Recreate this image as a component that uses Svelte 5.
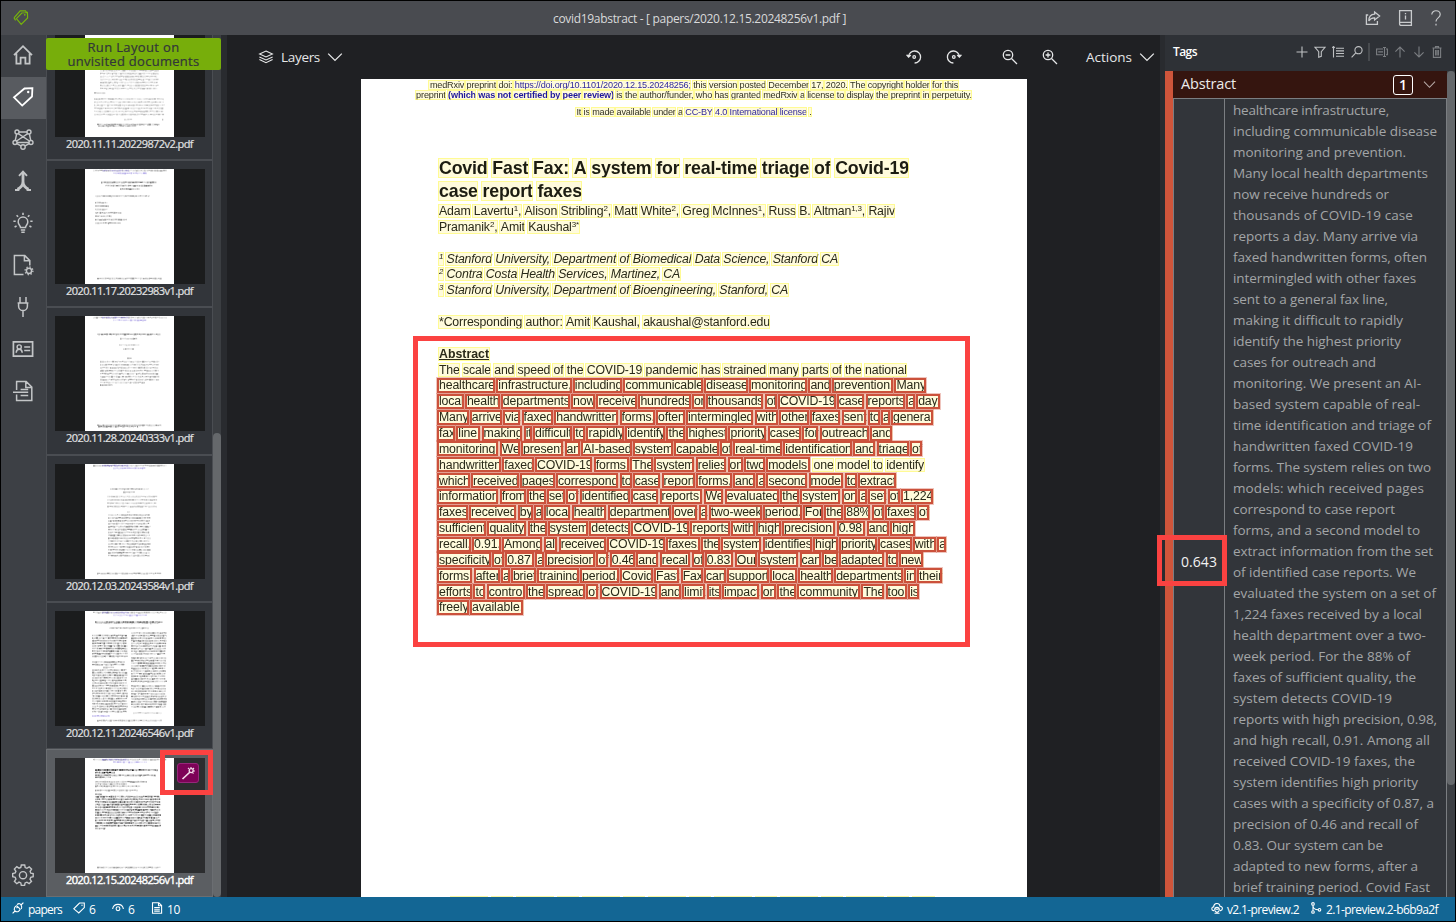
<script>
  function fit(node, width) {
    node.style.letterSpacing = '0px';
    const natural = node.getBoundingClientRect().width;
    const count = node.textContent.length;
    node.style.letterSpacing = (width - natural) / count + 'px';
  }

  const navIcons = ['home', 'tag', 'model', 'merge', 'bulb', 'docgear', 'plug', 'card', 'docline'];

  // [x, y, width, rows, pitch, opacity, colour]
  const G = '#222';
  const P = '#4a35c8';
  const head = [
    [8, 1.6, 74, 1, 3, 0.45, G],
    [17, 1.6, 28, 1, 3, 0.5, P],
    [28, 4.2, 34, 1, 3, 0.5, P]
  ];
  const foot = [[12, 109.5, 65, 1, 3, 0.55, G]];
  const docs = [
    { name: '2020.11.11.20229872v2.pdf', blocks: [[15, 48.5, 59, 7, 3, 0.4, G], [9, 71, 12, 1, 3, 0.5, G], [9, 77, 71, 6, 3.1, 0.38, G], [39, 97.5, 10, 1, 3, 0.4, G], [77, 97.5, 3, 1, 3, 0.4, G], [12, 102.5, 63, 1, 3, 0.6, G], [13, 104, 40, 1, 3, 0.5, G]] },
    { name: '2020.11.17.20232983v1.pdf', blocks: [...head, [16, 13.3, 56, 1, 3, 0.75, G], [20, 16.7, 48, 1, 3, 0.75, G], [35, 20, 20, 1, 3, 0.75, G], [10, 27, 56, 1, 3, 0.45, G], [10, 33.6, 14, 3, 3.4, 0.55, G], [10, 43.8, 27, 1, 3, 0.55, G], [10, 47.2, 17, 1, 3, 0.55, G], [10, 50.6, 34, 1, 3, 0.55, G], [10, 54, 26, 1, 3, 0.55, G], ...foot] },
    { name: '2020.11.28.20240333v1.pdf', blocks: [...head, [12, 18.3, 65, 1, 3, 0.7, G], [35, 22.7, 19, 1, 3, 0.6, G], [34, 29, 21, 1, 3, 0.35, G], [38, 33, 12, 1, 3, 0.45, G], [42, 42.3, 6, 1, 3, 0.5, G], [15, 45.7, 60, 7, 3, 0.5, G], [15, 66.5, 45, 1, 3, 0.4, G], [15, 69, 14, 1, 3, 0.7, G], [12, 109.3, 65, 1, 3, 0.6, G], [13, 110.5, 42, 1, 3, 0.7, G]] },
    { name: '2020.12.03.20243584v1.pdf', blocks: [...head, [25, 25, 39, 1, 3, 0.5, G], [38, 28, 12, 1, 3, 0.5, G], [22, 32.6, 51, 4, 3.3, 0.4, G], [42, 48, 5, 1, 3, 0.4, G], [23, 51, 43, 15, 2.9, 0.6, G], [44, 102, 1, 1, 3, 0.6, G], ...foot] },
    { name: '2020.12.11.20246546v1.pdf', blocks: [...head, [10, 11, 68, 1, 3, 0.85, G], [10, 12, 66, 1, 3, 0.45, G], [24, 17, 41, 1, 3, 0.5, G], [7, 24.5, 36, 9, 2.6, 0.8, G], [7, 51, 34, 2, 2.6, 0.6, G], [18, 56.4, 12, 1, 3, 0.45, G], [7, 59, 36, 17, 2.6, 0.65, G], [7, 105, 18, 1, 3, 0.55, P], [46, 22, 36, 9, 2.6, 0.65, G], [46, 47, 36, 10, 2.6, 0.65, G], [46, 75, 36, 9, 2.6, 0.65, G], [48, 102, 30, 1, 3, 0.4, G], ...foot] },
    { name: '2020.12.15.20248256v1.pdf', active: true, blocks: [...head, [10, 12, 63, 1, 3, 1.2, '#000'], [10, 14.6, 20, 1, 3, 1.2, '#000'], [10, 17.3, 61, 1, 3, 0.8, G], [10, 19.3, 17, 1, 3, 0.7, G], [10, 23.8, 53, 1, 3, 0.6, G], [10, 26, 32, 1, 3, 0.6, G], [10, 28.2, 47, 1, 3, 0.6, G], [10, 32.3, 44, 1, 3, 0.6, G], [10, 36.3, 7, 1, 3, 0.9, G], [10, 38.6, 66, 12, 2.64, 0.95, G], [10, 70.4, 12, 1, 3, 0.8, G], ...foot] }
  ];

  function strokes(blocks, seed) {
    let s = seed * 7919 + 17;
    const rnd = () => (s = (s * 16807) % 2147483647) / 2147483647;
    const out = [];
    for (const [x, y, w, rows, pitch, op, fill] of blocks) {
      for (let r = 0; r < rows; r++) {
        let cx = x;
        const end = x + w - rnd() * 2;
        while (cx < end) {
          const len = Math.min(0.6 + rnd() * 2.2, end - cx);
          out.push({ x: cx, y: y + r * pitch - 0.9 + rnd() * 0.3, w: len, h: 1.2 + rnd() * 0.7, o: Math.min(1, op * (0.2 + rnd() * 0.6)), fill });
          cx += len + rnd() * 0.5;
        }
      }
    }
    return out;
  }
  const thumbs = docs.map((d, i) => ({ ...d, marks: strokes(d.blocks, i + 1) }));

  const w = (text, kind = 'y') => text.split(' ').map((t) => ({ parts: t.split('^'), kind }));
  const header = [
    { width: 528, words: [...w('medRxiv preprint doi:'), ...w('https://doi.org/10.1101/2020.12.15.20248256;', 'y link'), ...w('this version posted December 17, 2020. The copyright holder for this')] },
    { width: 556, words: [...w('preprint'), ...w('(which was not certified by peer review)', 'y strong'), ...w('is the author/funder, who has granted medRxiv a license to display the preprint in perpetuity.')] },
    { width: 235, gap: true, words: [...w('It is made available under a'), ...w('CC-BY 4.0 International license', 'y link'), ...w('.')] }
  ];
  const title = [
    { width: 470, words: w('Covid Fast Fax: A system for real-time triage of Covid-19') },
    { width: 143, words: w('case report faxes') }
  ];
  const blank = { width: 0, words: [] };
  const body = [
    { width: 456, words: w('Adam Lavertu^1^, Alison Stribling^2^, Matt White^2^, Greg McInnes^1^, Russ B. Altman^1,3^, Rajiv') },
    { width: 140, words: w('Pramanik^2^, Amit Kaushal^3*^') },
    blank,
    { width: 399, cls: 'it', words: w('^1^ Stanford University, Department of Biomedical Data Science, Stanford CA') },
    { width: 241, cls: 'it', words: w('^2^ Contra Costa Health Services, Martinez, CA') },
    { width: 349, cls: 'it', words: w('^3^ Stanford University, Department of Bioengineering, Stanford, CA') },
    blank,
    { width: 331, words: w('*Corresponding author: Amit Kaushal, akaushal@stanford.edu') },
    blank,
    { width: 50, cls: 'sub', words: w('Abstract') },
    { width: 468, words: w('The scale and speed of the COVID-19 pandemic has strained many parts of the national') },
    { width: 487, words: w('healthcare infrastructure, including communicable disease monitoring and prevention. Many', 'r') },
    { width: 501, words: w('local health departments now receive hundreds or thousands of COVID-19 case reports a day.', 'r') },
    { width: 494, words: w('Many arrive via faxed handwritten forms, often intermingled with other faxes sent to a general', 'r') },
    { width: 453, words: w('fax line, making it difficult to rapidly identify the highest priority cases for outreach and', 'r') },
    { width: 483, words: w('monitoring. We present an AI-based system capable of real-time identification and triage of', 'r') },
    { width: 485, words: [...w('handwritten faxed COVID-19 forms. The system relies on two models:', 'r'), ...w('one model to identify')] },
    { width: 457, words: w('which received pages correspond to case report forms, and a second model to extract', 'r') },
    { width: 494, words: w('information from the set of identified case reports. We evaluated the system on a set of 1,224', 'r') },
    { width: 490, words: w('faxes received by a local health department over a two-week period. For the 88% of faxes of', 'r') },
    { width: 476, words: w('sufficient quality, the system detects COVID-19 reports with high precision, 0.98, and high', 'r') },
    { width: 507, words: w('recall, 0.91. Among all received COVID-19 faxes, the system identifies high priority cases with a', 'r') },
    { width: 484, words: w('specificity of 0.87, a precision of 0.46 and recall of 0.83. Our system can be adapted to new', 'r') },
    { width: 503, words: w('forms, after a brief training period. Covid Fast Fax can support local health departments in their', 'r') },
    { width: 480, words: w('efforts to control the spread of COVID-19 and limit its impact on the community. The tool is', 'r') },
    { width: 84, words: w('freely available.', 'r') }
  ];

  const tagLines = [
    ['healthcare infrastructure,', 156], ['including communicable disease', 204], ['monitoring and prevention.', 173],
    ['Many local health departments', 195], ['now receive hundreds or', 156], ['thousands of COVID-19 case', 180],
    ['reports a day. Many arrive via', 185], ['faxed handwritten forms, often', 194], ['intermingled with other faxes', 183],
    ['sent to a general fax line,', 155], ['making it difficult to rapidly', 170], ['identify the highest priority', 168],
    ['cases for outreach and', 143], ['monitoring. We present an AI-', 188], ['based system capable of real-', 187],
    ['time identification and triage of', 198], ['handwritten faxed COVID-19', 180], ['forms. The system relies on two', 198],
    ['models: which received pages', 191], ['correspond to case report', 162], ['forms, and a second model to', 187],
    ['extract information from the set', 200], ['of identified case reports. We', 183], ['evaluated the system on a set of', 203],
    ['1,224 faxes received by a local', 189], ['health department over a two-', 193], ['week period. For the 88% of', 177],
    ['faxes of sufficient quality, the', 183], ['system detects COVID-19', 159], ['reports with high precision, 0.98,', 204],
    ['and high recall, 0.91. Among all', 197], ['received COVID-19 faxes, the', 182], ['system identifies high priority', 185],
    ['cases with a specificity of 0.87, a', 201], ['precision of 0.46 and recall of', 185], ['0.83. Our system can be', 150],
    ['adapted to new forms, after a', 185], ['brief training period. Covid Fast', 197]
  ];
</script>

{#snippet pdfLine(line)}
  <span class="run" use:fit={line.width}>{#each line.words as word, i}{#if i}{' '}{/if}<span class="word {word.kind}">{word.parts[0]}{#if word.parts[1]}<sup>{word.parts[1]}</sup>{word.parts[2]}{/if}</span>{/each}</span>
{/snippet}

{#snippet navIcon(name)}
  <svg width="24" height="24" viewBox="0 0 24 24" fill="none" stroke="currentColor" stroke-width="1.6">
    {#if name === 'home'}
      <path d="M3 12.2 12 3.2l9 9M5.4 10.6v10h4.2v-6h4.8v6h4.2v-10" stroke-width="1.8" />
    {:else if name === 'tag'}
      <path d="M13.5 3.5 21.4 3.2 21 11.5 11.2 20.6 3 12.4Z" stroke-width="1.8" /><circle cx="17.2" cy="7" r="1.2" fill="currentColor" stroke="none" />
    {:else if name === 'model'}
      <g stroke-width="1.4"><circle cx="6" cy="5" r="2" /><circle cx="18" cy="5" r="2" /><circle cx="4" cy="15.5" r="2" /><circle cx="20" cy="15.5" r="2" /><circle cx="12" cy="20" r="2.2" />
      <path d="M8 5h8M5.6 7 4.3 13.4M18.4 7l1.3 6.4M5.8 16.6l4.2 2.3M18.2 16.6 14 18.900M7.300 6.600 18.400 14M16.700 6.600 5.600 14M6 15.500h12" /></g>
    {:else if name === 'merge'}
      <path d="M12 4v8.500c0 3-1.600 5.800-5.500 7.700M12 12.500c0 3 1.600 5.800 5.500 7.700" stroke-width="2.800" /><path d="M8 6.800 12 2.600l4 4.200M4 21h4.400M15.600 21H20" stroke-width="1.900" />
    {:else if name === 'bulb'}
      <path d="M9.5 16.5c0-2-2.3-2.8-2.3-5.6a4.8 4.8 0 0 1 9.6 0c0 2.8-2.3 3.6-2.3 5.6ZM9.8 19h4.4M10.3 21.2h3.4" stroke-width="1.500" /><path d="M12 1.7v2.2M5.6 4.2l1.5 1.6M18.4 4.2l-1.5 1.6M2.4 10.3h2.3M19.3 10.3h2.3M3.6 16l2-1M20.4 16l-2-1" stroke-width="1.6" />
    {:else if name === 'docgear'}
      <path d="M12.5 21.4H3.4V2.6h10.4l5 5v5M13.4 2.8v5h5" stroke-width="1.5" /><circle cx="18" cy="17.8" r="2.6" stroke-width="1.5" /><circle cx="18" cy="17.8" r="3.9" stroke-width="1.4" stroke-dasharray="1.3 1.76" />
    {:else if name === 'plug'}
      <path d="M9 2v6M15 2v6M6.6 8h10.8M7.6 8v3.2a4.4 4.4 0 0 0 8.8 0V8M12 15.6V22" stroke-width="1.5" />
    {:else if name === 'card'}
      <path d="M2.4 4.8h19.2v14.4H2.4Z" stroke-width="1.700" /><circle cx="8.2" cy="10" r="2.1" stroke-width="1.4" /><path d="M5.2 15.8c.2-4.6 5.8-4.6 6 0M13.2 10h6M13.2 13.6h6" stroke-width="1.5" />
    {:else if name === 'docline'}
      <path d="M5.6 11V2.6h9.6l5.6 5.4v13.4H5.6v-6M14.8 2.8v5.6h5.6M2 13.2h9M9.6 10.6h7.6M11 13.2h6.2M9.6 16.6h7.6" stroke-width="1.5" />
    {:else if name === 'gear'}
      <path d="M10.3 2h3.4l.5 2.6 1.7.7 2.3-1.5 2.4 2.4-1.5 2.2.7 1.8 2.4.4v3.2l-2.4.5-.8 1.8 1.5 2.2-2.4 2.4-2.2-1.5-1.8.7-.5 2.5h-3.3l-.5-2.5-1.8-.8-2.2 1.6-2.4-2.4 1.5-2.2-.7-1.8-2.5-.5v-3.3l2.5-.5.7-1.7-1.5-2.3 2.4-2.4 2.2 1.5 1.8-.7Z" stroke-width="1.4" /><circle cx="12" cy="12.2" r="3.6" stroke-width="1.4" />
    {/if}
  </svg>
{/snippet}

{#snippet chevron(size)}
  <svg width={size} height={size} viewBox="0 0 16 16" fill="none" stroke="currentColor" stroke-width="1.3"><path d="M1.2 4.6 8 11.4l6.8-6.8" /></svg>
{/snippet}

<div class="window">
  <header class="titlebar">
    <svg class="logo" width="18" height="18" viewBox="0 0 18 18" fill="none" stroke="#76b30c" stroke-width="1.2"><path d="M2 8.8 8.2 1.8h5.900M4.400 9.600 9.800 4l5.600-.6.200 5.600-6.400 6.400ZM2 8.800l1.600 2.600M14 2v1.500" /><circle cx="12.800" cy="5.800" r=".9" fill="#76b30c" stroke="none" /></svg>
    <div class="caption"><span use:fit={293}>covid19abstract - [ papers/2020.12.15.20248256v1.pdf ]</span></div>
    <div class="help">
      <svg width="16" height="16" viewBox="0 0 16 16" fill="none" stroke="currentColor" stroke-width="1.3"><path d="M3.2 5H1.400v9.300h11V11M9.600 2l5 4-5 4V7.800C6.400 7.600 5 8.800 3.800 11c0-4 2.200-6.600 5.800-6.800Z" /></svg>
      <svg width="16" height="16" viewBox="0 0 16 16" fill="none" stroke="currentColor" stroke-width="1.3"><path d="M2.600.600h11.800v14.800H4q-1.400 0-1.400-1.400ZM2.600 12.400h11.800M8.500 5.600v3.800M8.500 3v1.300" /></svg>
      <svg width="16" height="16" viewBox="0 0 16 16" fill="none" stroke="currentColor" stroke-width="1.2"><path d="M3.800 4.600c0-5.200 8.400-5 8.400 0 0 3.400-4.200 3.200-4.200 6.800M8 13.800v1.600" /></svg>
    </div>
  </header>

  <div class="main">
    <nav class="nav">
      {#each navIcons as icon}
        <div class="navitem" class:active={icon === 'tag'}>{@render navIcon(icon)}</div>
      {/each}
      <div class="navitem last">{@render navIcon('gear')}</div>
    </nav>

    <aside class="docs">
      <div class="doclist">
        {#each thumbs as doc}
          <div class="doc" class:active={doc.active}>
            <div class="thumb">
              <svg width="89" height="115" viewBox="0 0 89 115">
                <rect width="89" height="115" fill="#fff" />
                {#each doc.marks as m}<rect x={m.x} y={m.y} width={m.w} height={m.h} fill={m.fill} opacity={m.o} />{/each}
              </svg>
              {#if doc.active}
                <div class="badge"><svg width="15" height="15" viewBox="0 0 15 15" fill="none" stroke="#f3dcea" stroke-width="1.3"><path d="M1.500 13 9 6" stroke-width="1.700" /><circle cx="10.200" cy="4.600" r="2" /><path d="M10 .9v1.500M13 2l-1 1M13.900 5h-1.500M12.500 7.600l-1-1M7 1.800l1 1.200" stroke-width="1.100" /></svg></div>
              {/if}
            </div>
            <div class="docname"><span use:fit={127}>{doc.name}</span></div>
          </div>
        {/each}
      </div>
      <div class="track"><div class="grip"></div></div>
      <button class="run-layout"><span use:fit={92}>Run Layout on</span><span use:fit={132}>unvisited documents</span></button>
    </aside>

    <section class="editor">
      <div class="toolbar">
        <div class="group layers">
          <svg width="16" height="16" viewBox="0 0 16 16" fill="none" stroke="currentColor" stroke-width="1.1"><path d="M8 2 14.400 5 8 8 1.600 5ZM1.400 7.900 8 11l6.600-3.100M1.400 10.600 8 13.700l6.600-3.100" /></svg>
          <span use:fit={39}>Layers</span>
          {@render chevron(16)}
        </div>
        <div class="group tools">
          <svg width="16" height="16" viewBox="0 0 16 16" fill="none" stroke="currentColor" stroke-width="1.300"><path d="M2.600 7.500A6 6 0 1 1 8.600 14M.6 5.800l2 2.200 2.200-2" /><circle cx="8.200" cy="8" r="1.300" /></svg>
          <svg width="16" height="16" viewBox="0 0 16 16" fill="none" stroke="currentColor" stroke-width="1.300"><path d="M13.400 7.500A6 6 0 1 0 7.400 14M15.400 5.800l-2 2.200-2.200-2" /><circle cx="7.800" cy="8" r="1.300" /></svg>
          <svg class="zoomout" width="16" height="16" viewBox="0 0 16 16" fill="none" stroke="currentColor" stroke-width="1.300"><circle cx="6" cy="6" r="4.700" /><path d="M9.500 9.500 15 15M3.600 6h4.800" /></svg>
          <svg class="zoomin" width="16" height="16" viewBox="0 0 16 16" fill="none" stroke="currentColor" stroke-width="1.300"><circle cx="6" cy="6" r="4.700" /><path d="M9.500 9.500 15 15M3.600 6h4.800M6 3.600v4.800" /></svg>
          <span use:fit={46}>Actions</span>
          {@render chevron(16)}
        </div>
      </div>
      <div class="canvas">
        <article class="page">
          <div class="pagehead">
            {#each header as line}<div class="hl" class:gap={line.gap}>{@render pdfLine(line)}</div>{/each}
          </div>
          <h1>{#each title as line}<div class="tl">{@render pdfLine(line)}</div>{/each}</h1>
          <div class="pagebody">
            {#each body as line}<div class="bl {line.cls ?? ''}">{#if line.words.length}{@render pdfLine(line)}{/if}</div>{/each}
          </div>
          <div class="pagefoot"></div>
        </article>
      </div>
    </section>

    <aside class="tags">
      <div class="tagshead">
        <b use:fit={24}>Tags</b>
        <div class="tagtools">
          <svg width="12" height="12" viewBox="0 0 12 12"><path d="M6 .5v11M.5 6h11" /></svg>
          <svg width="12" height="12" viewBox="0 0 12 12"><path d="M.8 1.200h10.400L7.300 5.700v4.700L4.700 11.200V5.700Z" /></svg>
          <svg width="12" height="12" viewBox="0 0 12 12"><path d="M1.500.5v11M.2 1.800 1.500.5l1.300 1.300M4 2.200h8M4 4.900h8M4 7.500h8M4 10.200h8" stroke-width="1.100" /></svg>
          <svg width="12" height="12" viewBox="0 0 12 12"><circle cx="7.500" cy="4.200" r="3.600" /><path d="M4.800 6.800.6 11.400" /></svg>
          <i class="sep"></i>
          <svg class="dim" width="12" height="12" viewBox="0 0 12 12"><path d="M7 3H.6v5.800H7M2.200 5.900H7M10 3h1.400v5.800H10M8.500 1.500v9M7 1.500h3M7 10.500h3" /></svg>
          <svg class="dim" width="12" height="12" viewBox="0 0 12 12"><path d="M6 11.500V1M1.400 5.600 6 1l4.600 4.600" /></svg>
          <svg class="dim" width="12" height="12" viewBox="0 0 12 12"><path d="M6 .5V11M1.400 6.400 6 11l4.600-4.600" /></svg>
          <svg class="dim" width="12" height="12" viewBox="0 0 12 12"><path d="M1.500 2h9M4.500 1.800V.6h3v1.200M2.400 2v9.400h7.200V2M4.600 4v5.500M6 4v5.500M7.400 4v5.500" /></svg>
        </div>
      </div>
      <div class="tagsbody">
        <div class="stripe"></div>
        <div class="tagcol">
          <div class="taghead">
            <span class="tagname" use:fit={55}>Abstract</span>
            <span class="key">1</span>
            <span class="fold">{@render chevron(13)}</span>
          </div>
          <div class="tagrow">
            <div class="score"><span use:fit={36}>0.643</span></div>
            <div class="value">
              {#each tagLines as [text, width]}<div class="vl"><span use:fit={width}>{text}</span></div>{/each}
            </div>
          </div>
        </div>
        <div class="track tagtrack"><div class="grip"></div></div>
      </div>
    </aside>
  </div>

  <footer class="status">
    <svg width="12" height="12" viewBox="0 0 12 12"><path d="M.6 11.400 3 9M9 3 11.400.6M3 9C1 6.500 3.300 4.300 4.800 3.800l3.400 3.400C7.700 8.700 5.500 11 3 9ZM5 2.700c2-2 3.500-.8 4 .3s1.500 2 .3 4M4.500 6.200 6 4.600" /></svg>
    <span class="s1" use:fit={34}>papers</span>
    <svg width="12" height="12" viewBox="0 0 12 12"><path d="M6.500 1h4.800v4.600L5.800 11 .8 6.800Z" /><circle cx="9" cy="3.300" r=".7" fill="currentColor" stroke="none" /></svg>
    <span class="s2" use:fit={7}>6</span>
    <svg width="12" height="12" viewBox="0 0 12 12"><path d="M.6 7C1.600.800 10.400.800 11.400 7" /><circle cx="6" cy="6.700" r="1.900" /></svg>
    <span class="s3" use:fit={7}>6</span>
    <svg width="12" height="12" viewBox="0 0 12 12"><path d="M1.500.7h6.300l2.800 2.800v7.800H1.500ZM7.500.8v3h3M3.200 5.500h5.600M3.200 7.300h5.600M3.200 9.100h5.600" /></svg>
    <span use:fit={13}>10</span>
    <div class="versions">
      <svg width="12" height="12" viewBox="0 0 12 12"><path d="M3 8.600H2.500C.2 8.400.2 5 2.600 4.900 3 .6 8.400.4 9 4.200c3 0 3.200 4 .5 4.400H9M8.300 7.700a2.300 2.300 0 1 1-4.600 0 2.300 2.300 0 0 1 4.600 0ZM6 10v1.800M3.500 11.300h5M4.700 7.300h2.600" /></svg>
      <span class="s4" use:fit={72}>v2.1-preview.2</span>
      <svg width="12" height="12" viewBox="0 0 12 12"><circle cx="3" cy="1.900" r="1.300" /><circle cx="3" cy="10" r="1.300" /><circle cx="9.500" cy="7.800" r="1.300" /><path d="M3 3.200v5.500M3 4c.3 3 2.500 3.700 5.200 3.800" /></svg>
      <span use:fit={112}>2.1-preview.2-b6b9a2f</span>
    </div>
  </footer>

  <div class="mark abstract-mark"></div>
  <div class="mark badge-mark"></div>
  <div class="mark score-mark"></div>
</div>

<style>
  :global(body) { margin: 0; background: #000; overflow: hidden; }
  .window { position: relative; box-sizing: border-box; width: 1456px; height: 922px; border: 1px solid #000; background: #1f2023; color: #e4e5e6; font: 14px "Open Sans", "Noto Sans", sans-serif; display: flex; flex-direction: column; overflow: hidden; }
  .window :global(span), b { white-space: pre; }
  svg { display: block; flex: none; }

  .titlebar { height: 34px; flex: none; background: #494b50; display: flex; align-items: center; }
  .logo { margin-left: 11px; margin-top: -1px; }
  .caption { flex: 1; display: flex; padding-left: 523px; font-size: 12px; color: #d9dadb; }
  .help { display: flex; gap: 15px; padding-right: 10.500px; color: #c9cbcd; }
  .help svg { margin-right: 0.500px; margin-top: -1px; }

  .main { flex: 1; min-height: 0; display: flex; }
  .nav { width: 45px; background: #3d4045; display: flex; flex-direction: column; color: #c3c5c7; }
  .navitem { box-sizing: border-box; height: 42px; display: flex; align-items: center; padding: 0 0 2px 10px; }
  .navitem.active { background: #585b60; color: #fff; }
  .last { margin-top: auto; }

  .docs { position: relative; width: 181px; background: #292b2f; display: flex; overflow: hidden; }
  .doclist { width: 167px; display: flex; flex-direction: column; justify-content: flex-end; background: #32353a; padding-bottom: 0.500px; }
  .doc { box-sizing: border-box; flex: none; height: 147.300px; border: 1px solid #4a4d52; border-bottom-width: 1px; padding: 8px 8px 0; }
  .doc.active { background: #5b5e62; border-color: #6b6e72; }
  .thumb { position: relative; height: 115px; width: 150px; background: #1b1c1d; display: flex; padding-left: 30px; box-sizing: border-box; }
  .active .thumb { background: #2c2d2f; }
  .docname { font-size: 11px; line-height: 13px; display: flex; justify-content: center; color: #e2e3e4; -webkit-text-stroke: 0.200px; }
  .active .docname { color: #fff; -webkit-text-stroke: 0.400px; }
  .badge { position: absolute; right: 6px; top: 5px; width: 20px; height: 18px; border: 1px solid #96277a; border-radius: 3px; background: #7d0257; display: flex; align-items: center; justify-content: center; }
  .track { width: 8px; background: #3b3e42; position: relative; }
  .docs .track { display: flex; flex-direction: column; justify-content: flex-end; }
  .docs .grip { height: 464px; }
  .grip { background: #65686b; border-radius: 4px; }
  .run-layout { position: absolute; left: 0; top: 3px; width: 175px; height: 32px; border: 0; border-radius: 2px; background: #77ae0b; color: #32363a; font: 13px/14px "Open Sans", sans-serif; padding: 0 0 1px; display: flex; flex-direction: column; align-items: center; justify-content: center; -webkit-text-stroke: 0.200px; }

  .editor { flex: 1; display: flex; flex-direction: column; min-width: 0; }
  .toolbar { height: 44px; flex: none; display: flex; align-items: center; justify-content: space-between; padding: 0 5px 0 31px; font-size: 13.500px; color: #e6e7e8; }
  .group { display: flex; align-items: center; }
  .layers { gap: 7px; }
  .tools svg { margin-right: 23.500px; }
  .tools .zoomout { margin-left: 17px; margin-right: 24px; }
  .tools .zoomin { margin-right: 28px; }
  .tools svg:last-child { margin-right: 0; margin-left: 7px; }
  .canvas { flex: 1; min-height: 0; display: flex; padding-left: 134px; overflow: hidden; }
  .page { width: 666px; background: #fff; color: #2a2a1c; font-family: "Liberation Sans", Arial, sans-serif; display: flex; flex-direction: column; isolation: isolate; }
  .pagehead { font-size: 9.100px; padding-top: 2px; color: #333326; }
  .hl { height: 9.500px; line-height: 9.500px; display: flex; justify-content: center; }
  .hl.gap { margin-top: 8px; }
  h1 { margin: 41.500px 0 0 78px; font-size: 17.800px; color: #1c1c14; }
  .tl { height: 23px; line-height: 18px; display: flex; }
  .bl { height: 15.870px; line-height: 14px; display: flex; }
  .pagebody { margin: -1px 0 0 78px; font-size: 12.300px; }
  .it { font-style: italic; }
  .sub { font-weight: bold; text-decoration: underline; }
  .run { display: block; }
  .word { position: relative; }
  .word::before { content: ""; position: absolute; left: -1.500px; right: -0.500px; top: 0; bottom: 0; background: #fffbdc; mix-blend-mode: multiply; }
  .word::after { content: ""; position: absolute; left: -1.500px; right: -0.500px; top: 0; bottom: 0; border: 1px solid rgba(255, 250, 110, 0.650); }
  .r::after { left: -2px; right: 0; top: -0.500px; bottom: -0.500px; border: 2px solid #cb513b; box-shadow: 0 0 0 1px rgba(210, 90, 70, 0.350); }
  .link { color: #3028b4; }
  .strong { color: #2018b5; font-weight: bold; }
  sup { font-size: 8px; line-height: 0; vertical-align: 4px; }
  .pagefoot { margin: auto 92px 0 89px; height: 1px; background: repeating-linear-gradient(90deg, #f8f6a0 0 38px, #fff 38px 41px, #f8f6a0 41px 63px, #fff 63px 66px); }

  .tags { width: 290px; border-left: 5px solid #292b2f; background: #32353a; display: flex; flex-direction: column; }
  .tagshead { height: 36px; flex: none; background: #2e3136; display: flex; justify-content: space-between; padding: 0 12px 0 8px; font-size: 12px; color: #fff; }
  .tagshead b { padding-top: 8px; font-weight: 600; }
  .tagtools { display: flex; align-items: center; gap: 6.300px; padding-bottom: 3px; color: #bfc1c3; }
  .tagtools svg, .status svg { fill: none; stroke: currentColor; stroke-width: 1.100; }
  .sep { width: 2px; height: 18px; background: #484b4f; margin: 0 -0.500px; }
  .tagtools .dim { color: #7b7e82; }
  .tagsbody { flex: 1; min-height: 0; display: flex; overflow: hidden; }
  .stripe { width: 8px; background: #cf553b; }
  .tagcol { width: 274px; }
  .taghead { box-sizing: border-box; height: 27px; background: #35150f; display: flex; align-items: center; padding: 0 11px 0 8px; font-size: 14.500px; color: #ecebea; }
  .tagname { margin-top: -3px; }
  .key { margin-left: auto; margin-top: 1px; width: 18px; height: 18px; border: 1px solid #fff; border-radius: 3px; font-size: 14px; font-weight: 600; line-height: 17px; text-align: center; color: #fff; }
  .fold { color: #b9aca9; margin-left: 10px; }
  .tagrow { box-sizing: border-box; height: 928px; border: 1px solid #7b7e82; display: flex; }
  .score { width: 51px; box-sizing: border-box; border-right: 1px solid #7b7e82; display: flex; align-items: center; padding: 0 0 2px; justify-content: center; color: #f2f2f2; font-size: 14px; }
  .value { padding: 1px 0 0 8px; font-size: 13.500px; line-height: 21px; color: #a3a5a7; }
  .vl { height: 21px; display: flex; }
  .tagtrack .grip { height: 714px; }

  .status { height: 24px; flex: none; background: #136694; color: #fff; font-size: 12px; display: flex; align-items: center; padding: 0 17px 0 11px; }
  .status svg { margin-right: 4px; margin-top: -3px; }
  .s1 { margin-right: 11px; }
  .s2, .s3 { margin-right: 16px; }
  .versions { margin-left: auto; display: flex; align-items: center; }
  .s4 { margin-right: 11px; }

  .mark { position: absolute; box-sizing: border-box; border: 5px solid #fb4241; pointer-events: none; }
  .abstract-mark { left: 412px; top: 335px; width: 557px; height: 311px; }
  .badge-mark { left: 159px; top: 749px; width: 53px; height: 45px; }
  .score-mark { left: 1156px; top: 534px; width: 70px; height: 51px; }
</style>
